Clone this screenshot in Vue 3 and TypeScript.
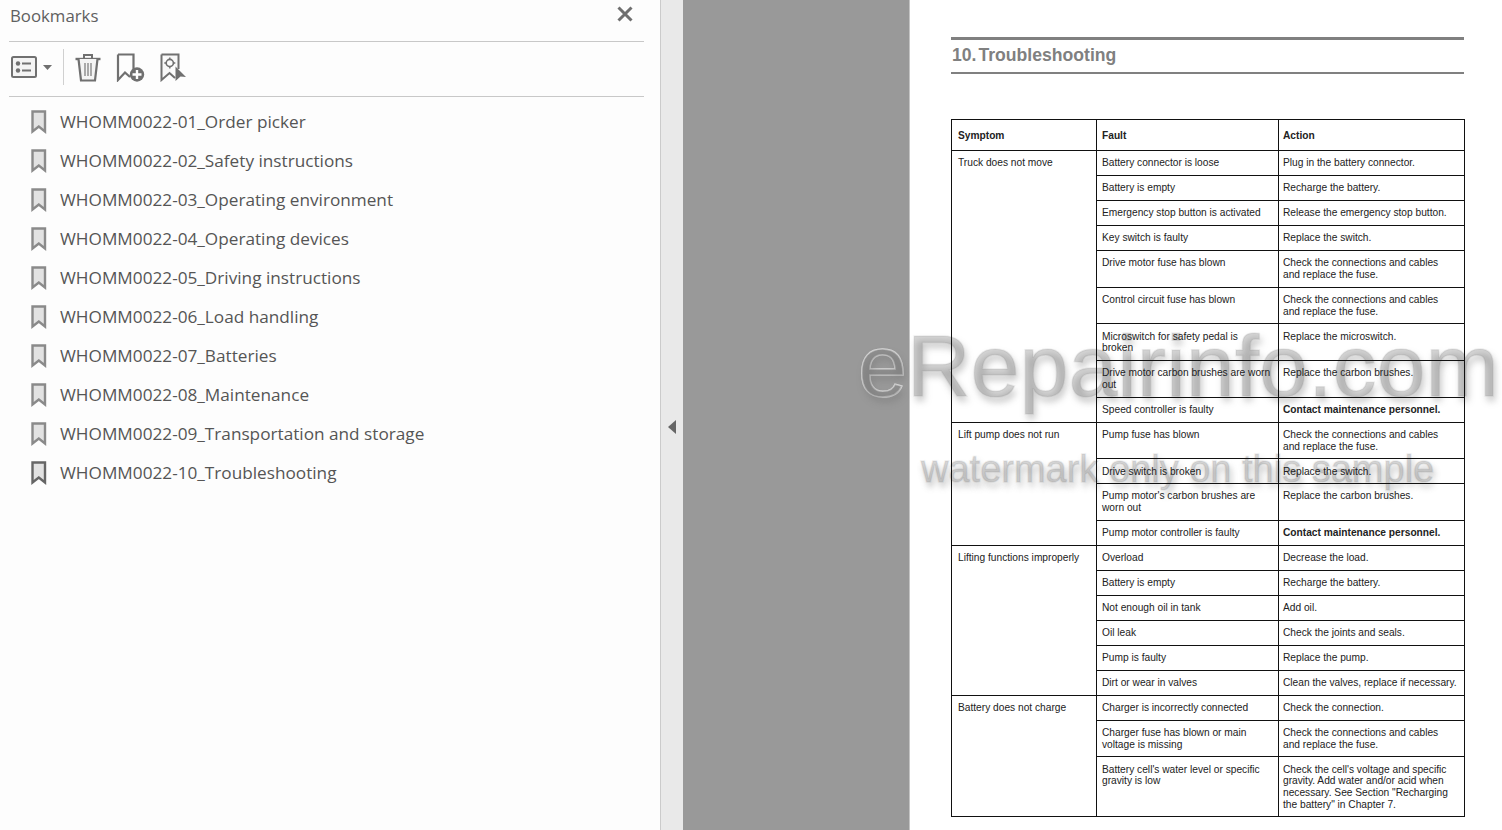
<script setup lang="ts">
// bookmark names in the left panel
const bookmarks = [
  'WHOMM0022-01_Order picker',
  'WHOMM0022-02_Safety instructions',
  'WHOMM0022-03_Operating environment',
  'WHOMM0022-04_Operating devices',
  'WHOMM0022-05_Driving instructions',
  'WHOMM0022-06_Load handling',
  'WHOMM0022-07_Batteries',
  'WHOMM0022-08_Maintenance',
  'WHOMM0022-09_Transportation and storage',
  'WHOMM0022-10_Troubleshooting',
];

interface Row {
  fault: string;
  action: string;
  strong?: boolean;
}

interface Group {
  symptom: string;
  rows: Row[];
}

// line breaks are the ones of the printed manual
const fuseAction = 'Check the connections and cables\nand replace the fuse.';

const groups: Group[] = [
  {
    symptom: 'Truck does not move',
    rows: [
      { fault: 'Battery connector is loose', action: 'Plug in the battery connector.' },
      { fault: 'Battery is empty', action: 'Recharge the battery.' },
      { fault: 'Emergency stop button is activated', action: 'Release the emergency stop button.' },
      { fault: 'Key switch is faulty', action: 'Replace the switch.' },
      { fault: 'Drive motor fuse has blown', action: fuseAction },
      { fault: 'Control circuit fuse has blown', action: fuseAction },
      { fault: 'Microswitch for safety pedal is\nbroken', action: 'Replace the microswitch.' },
      { fault: 'Drive motor carbon brushes are worn\nout', action: 'Replace the carbon brushes.' },
      { fault: 'Speed controller is faulty', action: 'Contact maintenance personnel.', strong: true },
    ],
  },
  {
    symptom: 'Lift pump does not run',
    rows: [
      { fault: 'Pump fuse has blown', action: fuseAction },
      { fault: 'Drive switch is broken', action: 'Replace the switch.' },
      { fault: "Pump motor's carbon brushes are\nworn out", action: 'Replace the carbon brushes.' },
      { fault: 'Pump motor controller is faulty', action: 'Contact maintenance personnel.', strong: true },
    ],
  },
  {
    symptom: 'Lifting functions improperly',
    rows: [
      { fault: 'Overload', action: 'Decrease the load.' },
      { fault: 'Battery is empty', action: 'Recharge the battery.' },
      { fault: 'Not enough oil in tank', action: 'Add oil.' },
      { fault: 'Oil leak', action: 'Check the joints and seals.' },
      { fault: 'Pump is faulty', action: 'Replace the pump.' },
      { fault: 'Dirt or wear in valves', action: 'Clean the valves, replace if necessary.' },
    ],
  },
  {
    symptom: 'Battery does not charge',
    rows: [
      { fault: 'Charger is incorrectly connected', action: 'Check the connection.' },
      { fault: 'Charger fuse has blown or main\nvoltage is missing', action: fuseAction },
      {
        fault: "Battery cell's water level or specific\ngravity is low",
        action: 'Check the cell\'s voltage and specific\ngravity. Add water and/or acid when\nnecessary. See Section "Recharging\nthe battery" in Chapter 7.',
      },
    ],
  },
];
</script>

<template>
  <div class="screen">
    <aside class="panel">
      <div class="panel-head">
        <span class="panel-title">Bookmarks</span>
        <svg class="close" width="18" height="18" viewBox="0 0 18 18">
          <path d="M2.5 2.5 L15.5 15.5 M15.5 2.5 L2.5 15.5" fill="none" stroke="#6f6f6f" stroke-width="3" />
        </svg>
      </div>

      <div class="toolbar">
        <svg width="27" height="22" viewBox="0 0 27 22">
          <rect x="1" y="1" width="24" height="20" rx="1.5" fill="#f4f4f4" stroke="#707070" stroke-width="2" />
          <circle cx="7" cy="7.5" r="2.2" fill="#707070" />
          <circle cx="7" cy="14.5" r="2.2" fill="#707070" />
          <path d="M11 7.5 H20 M11 14.5 H20" stroke="#707070" stroke-width="2" />
        </svg>
        <svg class="caret" width="9" height="5" viewBox="0 0 9 5">
          <path d="M0 0 H9 L4.5 5 Z" fill="#707070" />
        </svg>
        <span class="tool-sep"></span>
        <svg class="trash" width="26" height="29" viewBox="0 0 26 29">
          <path d="M0.5 6 H25.5" stroke="#707070" stroke-width="2.4" />
          <path d="M9 5 V2 H17 V5" fill="none" stroke="#707070" stroke-width="2" />
          <path d="M3.5 6 L6 27.5 H20 L22.5 6" fill="#f4f4f4" stroke="#707070" stroke-width="2.2" />
          <path d="M10 10 V23 M13 10 V23 M16 10 V23" stroke="#8a8a8a" stroke-width="1.4" />
        </svg>
        <svg class="mark-add" width="29" height="29" viewBox="0 0 29 29">
          <path d="M2 1.5 H17.5 V20 M2 1.5 V27 L9 19.5 L14 24" fill="none" stroke="#707070" stroke-width="2.2" />
          <circle cx="21" cy="21.5" r="7.2" fill="#707070" />
          <path d="M21 17 V26 M16.5 21.5 H25.5" stroke="#fff" stroke-width="2.4" />
        </svg>
        <svg class="mark-find" width="27" height="29" viewBox="0 0 27 29">
          <path d="M1.5 1.5 H18.5 V16 M1.5 1.5 V27 L9.5 20 L15 25" fill="#f8f8f8" stroke="#707070" stroke-width="2" />
          <circle cx="9.8" cy="10" r="3.6" fill="none" stroke="#707070" stroke-width="1.6" />
          <path d="M9.8 4.5 V6.5 M9.8 13.5 V15.5 M4.3 10 H6.3 M13.3 10 H15.3" stroke="#707070" stroke-width="1.4" />
          <path d="M15.5 13.5 L26 24 L20.5 23.5 L15.5 28 Z" fill="#707070" />
        </svg>
      </div>

      <ul class="marks">
        <li v-for="(name, i) in bookmarks" :key="name" class="mark" :class="{ last: i === bookmarks.length - 1 }">
          <svg class="mark-icon" width="16" height="24" viewBox="0 0 16 24">
            <path d="M1.5 1.5 H14 V21.5 L7.8 16.5 L1.5 21.5 Z" fill="#e2e2e2" stroke="currentColor" stroke-width="2.4" />
          </svg>
          <span>{{ name }}</span>
        </li>
      </ul>
    </aside>

    <div class="splitter">
      <svg width="9" height="14" viewBox="0 0 9 14">
        <path d="M8 0 V14 L0 7 Z" fill="#666" />
      </svg>
    </div>

    <div class="gutter"></div>

    <main class="page">
      <header class="chapter">
        <h1>10.<span class="chapter-name">Troubleshooting</span></h1>
      </header>

      <table class="faults">
        <colgroup>
          <col class="col-a" />
          <col class="col-b" />
          <col class="col-c" />
        </colgroup>
        <thead>
          <tr>
            <th>Symptom</th>
            <th>Fault</th>
            <th>Action</th>
          </tr>
        </thead>
        <tbody v-for="group in groups" :key="group.symptom">
          <tr v-for="(row, i) in group.rows" :key="row.fault">
            <td v-if="i === 0" :rowspan="group.rows.length">{{ group.symptom }}</td>
            <td>{{ row.fault }}</td>
            <td class="action" :class="{ strong: row.strong }">{{ row.action }}</td>
          </tr>
        </tbody>
      </table>
    </main>

    <div class="mark-big">eRepairinfo.com</div>
    <div class="mark-small">watermark only on this sample</div>
  </div>
</template>

<style>
html,
body {
  margin: 0;
  overflow: hidden;
}
</style>

<style scoped>
.screen {
  position: relative;
  display: flex;
  width: 1502px;
  height: 830px;
  overflow: hidden;
  background: #fff;
}

.panel {
  width: 660px;
  flex: none;
  background: #fdfdfd;
  border-right: 1px solid #cbcbcb;
  font-family: "Open Sans", "Liberation Sans", sans-serif;
  color: #505050;
}

.panel-head {
  display: flex;
  align-items: center;
  justify-content: space-between;
  height: 41px;
  margin: 0 16px 0 9px;
  padding: 0 11px 0 1px;
  border-bottom: 1px solid #c8c8c8;
}

.panel-title {
  position: relative;
  top: -5px;
  font-size: 16.8px;
  color: #606060;
}

.close {
  position: relative;
  top: -7px;
  left: 1px;
}

.toolbar {
  display: flex;
  align-items: center;
  height: 50px;
  margin: 0 16px 0 9px;
  padding: 0 0 4px 2px;
  border-bottom: 1px solid #c8c8c8;
}

.caret {
  margin-left: 5px;
}

.tool-sep {
  width: 1px;
  height: 36px;
  margin: 0 11px 0 11px;
  background: #d0d0d0;
}

.mark-add {
  margin-left: 15px;
}

.mark-find {
  margin-left: 15px;
}

.marks {
  list-style: none;
  margin: 5px 0 0;
  padding: 0 0 0 31px;
}

.mark {
  display: flex;
  align-items: center;
  gap: 13px;
  height: 39px;
  font-size: 17.2px;
  color: #555;
}

.mark-icon {
  color: #8a8a8a;
  flex: none;
}

.mark.last .mark-icon {
  color: #666;
}

.splitter {
  display: flex;
  align-items: center;
  justify-content: center;
  width: 22px;
  flex: none;
  background: #e9e9e9;
}

.splitter svg {
  position: relative;
  top: 12px;
}

.gutter {
  width: 226px;
  flex: none;
  background: #999;
  border-right: 1px solid #c4c4c4;
}

/* page sits above the watermark so the table stays readable through it */
.page {
  position: relative;
  z-index: 2;
  flex: 1;
  min-width: 0;
  padding: 37px 38px 0 41px;
  font-family: "Liberation Sans", Arial, sans-serif;
  color: #222;
}

.chapter {
  height: 32px;
  border-top: 3px solid #808080;
  border-bottom: 2px solid #808080;
  margin-bottom: 45px;
}

.chapter h1 {
  margin: 0;
  padding-left: 1px;
  font-size: 17.6px;
  line-height: 30px;
  font-weight: 700;
  color: #808080;
}

.chapter-name {
  margin-left: 2px;
}

.faults {
  width: 513px;
  table-layout: fixed;
  border-collapse: collapse;
  font-size: 10.2px;
  line-height: 11.67px;
  border: 1.5px solid #111;
}

.col-a {
  width: 145px;
}

.col-b {
  width: 182px;
}

.col-c {
  width: 186px;
}

.faults th,
.faults td {
  border: 1px solid #111;
  padding: 6.3px 2px 6.03px 5px;
  text-align: left;
  vertical-align: top;
  white-space: pre-line;
}

.faults th {
  padding-top: 10px;
  padding-bottom: 8.33px;
  font-weight: 700;
}

.faults th:first-child,
.faults td:first-child[rowspan] {
  padding-left: 6px;
}

.faults th:last-child,
.faults td.action {
  padding-left: 4px;
}

.faults td.strong {
  font-weight: 700;
}

.mark-big,
.mark-small {
  position: absolute;
  z-index: 1;
  font-family: "Liberation Sans", Arial, sans-serif;
  line-height: 1;
  white-space: nowrap;
  color: rgba(120, 120, 120, 0.3);
  -webkit-text-stroke: 1.5px rgba(235, 235, 235, 0.8);
  paint-order: stroke fill;
  pointer-events: none;
}

.mark-big {
  left: 858px;
  top: 322px;
  font-size: 88px;
  text-shadow: 2px 5px 7px rgba(110, 110, 110, 0.4);
}

.mark-small {
  left: 921px;
  top: 450px;
  font-size: 38px;
  text-shadow: 2px 5px 6px rgba(110, 110, 110, 0.45);
}
</style>
